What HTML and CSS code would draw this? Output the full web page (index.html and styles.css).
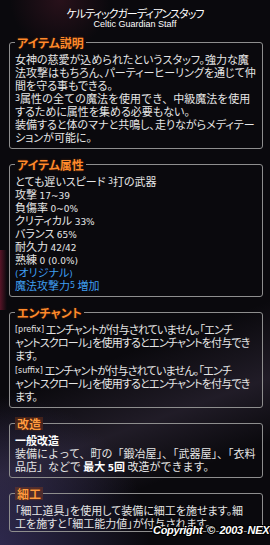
FILE: index.html
```html
<!DOCTYPE html>
<html lang="ja">
<head>
    <meta charset="UTF-8">
    <meta name="viewport" content="width=device-width, initial-scale=1.0">
    <title>ケルティックガーディアンスタッフ</title>
    <link rel="stylesheet" href="styles.css">
</head>
<body>

    <div class="tooltip">
        <div class="item-name">ケルティックガーディアンスタッフ</div>
        <div class="item-name-en">Celtic Guardian Staff</div>

        <div class="sections">
            <fieldset class="section">
                <legend>アイテム説明</legend>
                <p>女神の慈愛が込められたというスタッフ。強力な魔<br>
                法攻撃はもちろん、パーティーヒーリングを通じて仲<br>
                間を守る事もできる。<br>
                <span class="wide"><span class="sup">3</span>属性の全ての魔法を使用でき、中級魔法を使用</span><br>
                するために属性を集める必要もない。<br>
                装備すると体のマナと共鳴し、走りながらメディテー<br>
                ションが可能に。</p>
            </fieldset>

            <fieldset class="section">
                <legend>アイテム属性</legend>
                <p>とても遅いスピード <span class="sup">3</span>打の武器<br>
                攻撃 <span class="num">17~39</span><br>
                負傷率 <span class="num">0~0%</span><br>
                クリティカル <span class="num">33%</span><br>
                バランス <span class="num">65%</span><br>
                耐久力 <span class="num">42/42</span><br>
                熟練 <span class="num">0 (0.0%)</span><br>
                <span class="blue"><span class="num">(</span>オリジナル<span class="num">)</span></span><br>
                <span class="blue">魔法攻撃力<span class="sup">5</span> 増加</span></p>
            </fieldset>

            <fieldset class="section">
                <legend>エンチャント</legend>
                <p class="tight"><span class="sup">[prefix]</span> エンチャントが付与されていません。「エンチ<br>
                ャントスクロール」を使用するとエンチャントを付与でき<br>
                ます。</p>
                <p class="tight"><span class="sup">[suffix]</span> エンチャントが付与されていません。「エンチ<br>
                ャントスクロール」を使用するとエンチャントを付与でき<br>
                ます。</p>
            </fieldset>

            <fieldset class="section">
                <legend class="lit">改造</legend>
                <p class="wide"><span class="strong">一般改造</span><br>
                装備によって、町の「鍛冶屋」、「武器屋」、「衣料<br>
                品店」などで <span class="strong">最大 <span class="num">5</span>回</span> 改造ができます。</p>
            </fieldset>

            <fieldset class="section">
                <legend class="lit">細工</legend>
                <p>「細工道具」を使用して装備に細工を施せます。細<br>
                工を施すと「細工能力値」が付与されます。</p>
            </fieldset>
        </div>

        <div class="copyright">Copyright © 2003 NEXON</div>
    </div>

</body>
</html>
```

FILE: styles.css
```css
* {
    box-sizing: border-box;
}
html, body {
    margin: 0;
    height: 100%;
}
body {
    background: #0a090d;
    font-family: "Noto Sans CJK JP", sans-serif;
    font-size: 11px;
    line-height: 13px;
    color: #e6e6e6;
    font-feature-settings: "palt";
    overflow: hidden;
}
.tooltip {
    position: relative;
    height: 545px;
    padding-top: 6px;
    background:
        linear-gradient(90deg, rgba(150,30,60,.55), rgba(150,30,60,0) 7px) 0 250px / 100% 60px no-repeat,
        radial-gradient(ellipse 150px 150px at 0 100%, rgba(70,62,120,.6), rgba(70,62,120,0)),
        linear-gradient(160deg, rgba(0,0,0,0) 62%, rgba(85,72,100,.3) 74%, rgba(0,0,0,0) 84%),
        radial-gradient(ellipse 50px 50px at 60px 0, rgba(70,25,40,.5), rgba(70,25,40,0)),
        #0a090d;
}
.item-name {
    text-align: center;
    line-height: 14px;
    letter-spacing: -1px;
    color: #fff;
}
.item-name-en {
    text-align: center;
    font-family: "Liberation Sans", sans-serif;
    font-size: 9px;
    line-height: 9px;
    color: #fff;
}
.sections {
    display: flex;
    flex-direction: column;
    gap: 9px;
    padding: 7px 7px 0 9px;
}
.section {
    margin: 0;
    padding: 4px 5px 4px 5px;
    border: 1px solid #8e8e8e;
    border-radius: 3px;
    min-inline-size: 0;
}
.section:last-child {
    padding-bottom: 1px;
}
.section legend {
    padding: 0 2px;
    font-size: 12px;
    font-weight: bold;
    line-height: 13px;
    color: #ff8a2c;
    text-shadow: 0 0 1px #000, 0 0 2px rgba(255,110,20,.45);
}
.section legend.lit {
    color: #ff9a40;
    background: rgba(170,70,20,.3);
}
.section p {
    margin: 0;
    white-space: nowrap;
}
.section p + p {
    margin-top: 2px;
}
.tight {
    letter-spacing: -0.8px;
}
.wide {
    font-feature-settings: normal;
}
.num {
    font-family: "DejaVu Sans", sans-serif;
    font-size: 9px;
    line-height: 9px;
    letter-spacing: 0;
}
.sup {
    font-family: "DejaVu Sans", sans-serif;
    font-size: 8px;
    line-height: 8px;
    letter-spacing: 0;
    vertical-align: 2px;
}
.blue {
    color: #3f9ef0;
}
.strong {
    color: #fff;
    font-weight: bold;
}
.copyright {
    position: absolute;
    left: 153px;
    top: 524px;
    font-family: "Liberation Sans", sans-serif;
    font-size: 11px;
    font-weight: bold;
    font-style: italic;
    letter-spacing: -0.3px;
    word-spacing: 2px;
    color: #fff;
    white-space: nowrap;
    text-shadow: 1px 0 #000, -1px 0 #000, 0 1px #000, 0 -1px #000, 1px 1px #000, -1px -1px #000, 1px -1px #000, -1px 1px #000;
}
```
